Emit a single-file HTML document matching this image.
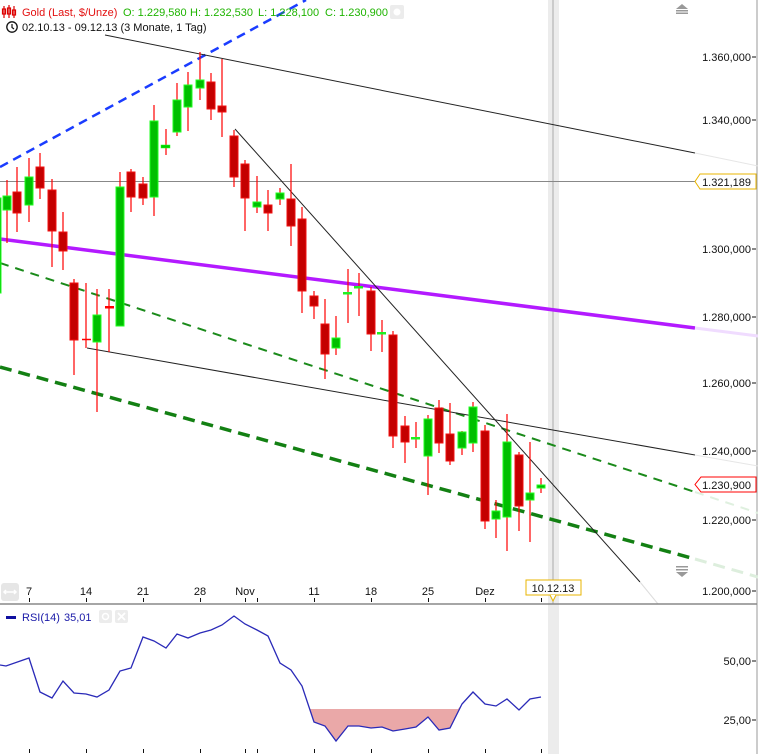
<!DOCTYPE html>
<html><head><meta charset="utf-8"><style>
html,body{margin:0;padding:0;background:#fff;width:758px;height:754px;overflow:hidden}
svg{display:block;font-family:"Liberation Sans",Arial,sans-serif}
.w{stroke:#f00;stroke-width:1.2}
.r{fill:#c40000;stroke:#f01010;stroke-width:1}
.g{fill:#00bf00;stroke:#20ff20;stroke-width:1}
.ax{font-size:11px;fill:#111;text-anchor:end}
.xl{font-size:11px;fill:#111;text-anchor:middle}
.hg{font-size:11px;fill:#1eb400}
</style></head><body>
<svg width="758" height="754" viewBox="0 0 758 754">
<rect x="548" y="0" width="11" height="754" fill="#ececec"/>
<line x1="553" y1="0" x2="553" y2="604" stroke="#aaa" stroke-width="1"/>
<line x1="757" y1="0" x2="757" y2="754" stroke="#999"/>
<line x1="0" y1="181.5" x2="695" y2="181.5" stroke="#888" stroke-width="1"/>

<line x1="0" y1="167" x2="306" y2="0" stroke="#1a3cff" stroke-width="2.5" stroke-dasharray="9,6"/>
<line x1="105" y1="35" x2="695" y2="153" stroke="#222" stroke-width="1"/>
<line x1="695" y1="153" x2="758" y2="166" stroke="#e6e6e6" stroke-width="1"/>
<line x1="0" y1="239" x2="695" y2="328" stroke="#b31aff" stroke-width="3.5"/>
<line x1="695" y1="328" x2="758" y2="336" stroke="#f0dcff" stroke-width="3"/>
<line x1="0" y1="263" x2="695" y2="492" stroke="#1a8a1a" stroke-width="2" stroke-dasharray="9,7"/>
<line x1="695" y1="492" x2="758" y2="513" stroke="#dff0df" stroke-width="2" stroke-dasharray="9,7"/>
<line x1="0" y1="367" x2="695" y2="559" stroke="#138013" stroke-width="3.5" stroke-dasharray="12,7"/>
<line x1="695" y1="559" x2="758" y2="577" stroke="#ddeedd" stroke-width="3" stroke-dasharray="12,7"/>
<line x1="87" y1="348" x2="695" y2="455" stroke="#222" stroke-width="1"/>
<line x1="695" y1="455" x2="758" y2="466" stroke="#e6e6e6"/>
<line x1="235" y1="129" x2="640" y2="582" stroke="#222" stroke-width="1"/>
<line x1="640" y1="582" x2="658" y2="604" stroke="#ddd"/>

<g>
<line class="w" x1="0" y1="198" x2="0" y2="293"/><rect class="g" x="-4" y="198" width="5" height="95"/>
<line class="w" x1="7" y1="180" x2="7" y2="243"/><rect class="g" x="3" y="196" width="8" height="14"/>
<line class="w" x1="17" y1="167" x2="17" y2="232"/><rect class="r" x="13" y="192" width="8" height="21"/>
<line class="w" x1="29" y1="158" x2="29" y2="222"/><rect class="g" x="25" y="177" width="8" height="28"/>
<line class="w" x1="40" y1="153" x2="40" y2="199"/><rect class="r" x="36" y="167" width="8" height="21"/>
<line class="w" x1="52" y1="179" x2="52" y2="267"/><rect class="r" x="48" y="190" width="8" height="41"/>
<line class="w" x1="63" y1="212" x2="63" y2="270"/><rect class="r" x="59" y="232" width="8" height="19"/>
<line class="w" x1="74" y1="279" x2="74" y2="375"/><rect class="r" x="70" y="283" width="8" height="57"/>
<line class="w" x1="86" y1="283" x2="86" y2="348"/><line x1="82" y1="339.5" x2="91" y2="339.5" stroke="#f00" stroke-width="1.5"/>
<line class="w" x1="97" y1="289" x2="97" y2="412"/><rect class="g" x="93" y="315" width="8" height="27"/>
<line class="w" x1="109" y1="289" x2="109" y2="352"/><rect x="105" y="306" width="9" height="2.5" fill="#f00"/>
<line class="w" x1="120" y1="172" x2="120" y2="326"/><rect class="g" x="116" y="187" width="8" height="139"/>
<line class="w" x1="131" y1="169" x2="131" y2="212"/><rect class="r" x="127" y="172" width="8" height="25"/>
<line class="w" x1="143" y1="177" x2="143" y2="205"/><rect class="r" x="139" y="184" width="8" height="14"/>
<line class="w" x1="154" y1="105" x2="154" y2="216"/><rect class="g" x="150" y="121" width="8" height="76"/>
<line class="w" x1="166" y1="129" x2="166" y2="155"/><rect x="161" y="145" width="9" height="3" fill="#00d000" stroke="#20ff20" stroke-width=".5"/>
<line class="w" x1="177" y1="83" x2="177" y2="136"/><rect class="g" x="173" y="100" width="8" height="32"/>
<line class="w" x1="188" y1="72" x2="188" y2="131"/><rect class="g" x="184" y="85" width="8" height="22"/>
<line class="w" x1="200" y1="52" x2="200" y2="100"/><rect class="g" x="196" y="80" width="8" height="8"/>
<line class="w" x1="211" y1="73" x2="211" y2="120"/><rect class="r" x="207" y="82" width="8" height="27"/>
<line class="w" x1="222" y1="59" x2="222" y2="137"/><rect class="r" x="218" y="106" width="8" height="6"/>
<line class="w" x1="234" y1="130" x2="234" y2="187"/><rect class="r" x="230" y="136" width="8" height="41"/>
<line class="w" x1="245" y1="160" x2="245" y2="231"/><rect class="r" x="241" y="164" width="8" height="34"/>
<line class="w" x1="257" y1="176" x2="257" y2="213"/><rect class="g" x="253" y="202" width="8" height="5"/>
<line class="w" x1="268" y1="190" x2="268" y2="231"/><rect class="r" x="264" y="205" width="8" height="8"/>
<line class="w" x1="280" y1="188" x2="280" y2="205"/><rect class="g" x="276" y="193" width="8" height="6"/>
<line class="w" x1="291" y1="164" x2="291" y2="246"/><rect class="r" x="287" y="199" width="8" height="27"/>
<line class="w" x1="302" y1="207" x2="302" y2="313"/><rect class="r" x="298" y="219" width="8" height="72"/>
<line class="w" x1="314" y1="291" x2="314" y2="319"/><rect class="r" x="310" y="296" width="8" height="10"/>
<line class="w" x1="325" y1="299" x2="325" y2="379"/><rect class="r" x="321" y="324" width="8" height="30"/>
<line class="w" x1="336" y1="316" x2="336" y2="355"/><rect class="g" x="332" y="338" width="8" height="10"/>
<line class="w" x1="348" y1="269" x2="348" y2="323"/><rect x="343" y="292" width="9" height="2.5" fill="#20f020"/>
<line class="w" x1="359" y1="273" x2="359" y2="316"/><rect x="354" y="286" width="9" height="2.5" fill="#20f020"/>
<line class="w" x1="371" y1="287" x2="371" y2="351"/><rect class="r" x="367" y="291" width="8" height="43"/>
<line class="w" x1="382" y1="320" x2="382" y2="352"/><rect x="377" y="332" width="9" height="2.5" fill="#20f020"/>
<line class="w" x1="393" y1="331" x2="393" y2="448"/><rect class="r" x="389" y="335" width="8" height="101"/>
<line class="w" x1="405" y1="416" x2="405" y2="463"/><rect class="r" x="401" y="426" width="8" height="16"/>
<line class="w" x1="416" y1="422" x2="416" y2="448"/><rect x="411" y="437" width="9" height="2.5" fill="#20f020"/>
<line class="w" x1="428" y1="415" x2="428" y2="495"/><rect class="g" x="424" y="419" width="8" height="37"/>
<line class="w" x1="439" y1="400" x2="439" y2="453"/><rect class="r" x="435" y="408" width="8" height="35"/>
<line class="w" x1="450" y1="403" x2="450" y2="465"/><rect class="r" x="446" y="434" width="8" height="27"/>
<line class="w" x1="462" y1="431" x2="462" y2="455"/><rect class="g" x="458" y="432" width="8" height="16"/>
<line class="w" x1="473" y1="402" x2="473" y2="452"/><rect class="g" x="469" y="407" width="8" height="36"/>
<line class="w" x1="485" y1="425" x2="485" y2="529"/><rect class="r" x="481" y="431" width="8" height="90"/>
<line class="w" x1="496" y1="500" x2="496" y2="538"/><rect class="g" x="492" y="511" width="8" height="8"/>
<line class="w" x1="507" y1="414" x2="507" y2="551"/><rect class="g" x="503" y="442" width="8" height="75"/>
<line class="w" x1="519" y1="452" x2="519" y2="531"/><rect class="r" x="515" y="455" width="8" height="51"/>
<line class="w" x1="530" y1="442" x2="530" y2="542"/><rect class="g" x="526" y="493" width="8" height="7"/>
<line class="w" x1="541" y1="478" x2="541" y2="493"/><rect class="g" x="537" y="485" width="8" height="3"/>
</g>

<g stroke="#d00" stroke-width="1.2" fill="none">
<line x1="4" y1="6" x2="4" y2="18"/><rect x="2.5" y="9" width="3" height="5"/>
<line x1="9" y1="5" x2="9" y2="18"/><rect x="7.5" y="8" width="3" height="6"/>
<line x1="14" y1="6" x2="14" y2="18"/><rect x="12.5" y="10" width="3" height="5"/>
</g>
<text x="22" y="16" font-size="11" fill="#e31010">Gold (Last, $/Unze)</text>
<text x="123" y="16" class="hg">O: 1.229,580</text>
<text x="190" y="16" class="hg">H: 1.232,530</text>
<text x="258" y="16" class="hg">L: 1.228,100</text>
<text x="325" y="16" class="hg">C: 1.230,900</text>
<rect x="390" y="5" width="14" height="14" rx="2" fill="#ececec"/>
<circle cx="397" cy="12" r="3.5" fill="#fff"/>
<circle cx="12" cy="27" r="5.2" fill="none" stroke="#111" stroke-width="1.3"/>
<path d="M12 24 V27.5 L14 29" stroke="#111" stroke-width="1.2" fill="none"/>
<text x="22" y="31" font-size="11" fill="#111">02.10.13 - 09.12.13 (3 Monate, 1 Tag)</text>

<path d="M676 9 L682 4 L688 9 Z" fill="#999"/><rect x="676" y="10" width="12" height="1.5" fill="#999"/><rect x="676" y="12.5" width="12" height="1.5" fill="#999"/>
<rect x="676" y="566" width="12" height="1.5" fill="#999"/><rect x="676" y="569" width="12" height="1.5" fill="#999"/><path d="M676 572 L688 572 L682 577 Z" fill="#999"/>

<g class="ax">
<text x="751" y="61">1.360,000</text>
<text x="751" y="124">1.340,000</text>
<text x="751" y="253">1.300,000</text>
<text x="751" y="321">1.280,000</text>
<text x="751" y="387">1.260,000</text>
<text x="751" y="455">1.240,000</text>
<text x="751" y="524">1.220,000</text>
<text x="751" y="595">1.200,000</text>
<text x="751" y="665">50,00</text>
<text x="751" y="724">25,00</text>
</g>
<g stroke="#111" stroke-width="1">
<line x1="752" y1="57" x2="756" y2="57"/><line x1="752" y1="120" x2="756" y2="120"/>
<line x1="752" y1="249" x2="756" y2="249"/><line x1="752" y1="317" x2="756" y2="317"/>
<line x1="752" y1="383" x2="756" y2="383"/><line x1="752" y1="451" x2="756" y2="451"/>
<line x1="752" y1="520" x2="756" y2="520"/><line x1="752" y1="591" x2="756" y2="591"/>
<line x1="752" y1="661" x2="756" y2="661"/><line x1="752" y1="720" x2="756" y2="720"/>
</g>
<path d="M700 174 H756 V189 H700 L695 181.5 Z" fill="#fff" stroke="#e8b400" stroke-width="1"/>
<text x="751" y="186" class="ax">1.321,189</text>
<path d="M701 477 H756 V492 H701 L695 484.5 Z" fill="#fff" stroke="#f00" stroke-width="1"/>
<text x="751" y="489" class="ax">1.230,900</text>

<g class="xl">
<text x="29" y="595">7</text><text x="86" y="595">14</text><text x="143" y="595">21</text>
<text x="200" y="595">28</text><text x="245" y="595">Nov</text><text x="314" y="595">11</text>
<text x="371" y="595">18</text><text x="428" y="595">25</text><text x="485" y="595">Dez</text>
</g>
<g stroke="#111" stroke-width="1">
<line x1="29.5" y1="598" x2="29.5" y2="602"/><line x1="86.5" y1="598" x2="86.5" y2="602"/>
<line x1="143.5" y1="598" x2="143.5" y2="602"/><line x1="200.5" y1="598" x2="200.5" y2="602"/>
<line x1="245.5" y1="598" x2="245.5" y2="602"/><line x1="257.5" y1="598" x2="257.5" y2="602"/>
<line x1="314.5" y1="598" x2="314.5" y2="602"/><line x1="371.5" y1="598" x2="371.5" y2="602"/>
<line x1="428.5" y1="598" x2="428.5" y2="602"/><line x1="485.5" y1="598" x2="485.5" y2="602"/>
<line x1="541.5" y1="598" x2="541.5" y2="602"/>
<line x1="29.5" y1="749" x2="29.5" y2="753"/><line x1="86.5" y1="749" x2="86.5" y2="753"/>
<line x1="143.5" y1="749" x2="143.5" y2="753"/><line x1="200.5" y1="749" x2="200.5" y2="753"/>
<line x1="245.5" y1="749" x2="245.5" y2="753"/><line x1="257.5" y1="749" x2="257.5" y2="753"/>
<line x1="314.5" y1="749" x2="314.5" y2="753"/><line x1="371.5" y1="749" x2="371.5" y2="753"/>
<line x1="428.5" y1="749" x2="428.5" y2="753"/><line x1="485.5" y1="749" x2="485.5" y2="753"/>
<line x1="541.5" y1="749" x2="541.5" y2="753"/>
</g>
<rect x="526" y="580" width="55" height="15" fill="#fff" stroke="#e8b400"/>
<path d="M550 595 L553 601 L556 595" fill="#fff" stroke="#e8b400"/>
<text x="553" y="592" class="xl">10.12.13</text>
<rect x="1" y="583" width="18" height="18" rx="3" fill="#e6e6e6"/>
<path d="M4 592 H16 M6 590 L4 592 L6 594 M14 590 L16 592 L14 594" stroke="#fff" stroke-width="1.5" fill="none"/>

<line x1="0" y1="604" x2="757" y2="604" stroke="#888" stroke-width="1.5"/>

<rect x="6" y="616" width="10" height="3" fill="#1010a0"/>
<text x="22" y="621" font-size="11" fill="#1a1aa8">RSI(14)</text>
<text x="64" y="621" font-size="11" fill="#1a1aa8">35,01</text>
<rect x="99" y="610" width="13" height="13" rx="2" fill="#ececec"/><circle cx="105.5" cy="616.5" r="3" fill="none" stroke="#fff" stroke-width="1.5"/>
<rect x="115" y="610" width="13" height="13" rx="2" fill="#ececec"/><path d="M118 613 L125 620 M125 613 L118 620" stroke="#fff" stroke-width="1.8"/>

<polygon points="310,709 458,709 462,704 450,728 439,730 428,717 416,727 405,729 393,731 382,727 371,728 359,726 348,726 336,741 325,726 314,722" fill="#eaa8a8"/>
<polyline fill="none" stroke="#2a2ab8" stroke-width="1.3" points="0,665 6,666 29,658 40,692 52,698 63,681 74,693 86,694 97,697 109,690 120,671 131,668 143,637 154,641 166,648 177,634 188,638 200,633 211,630 222,625 234,616 245,624 257,630 268,636 280,663 291,670 302,686 314,722 325,726 336,741 348,726 359,726 371,728 382,727 393,731 405,729 416,727 428,717 439,730 450,728 462,704 473,692 485,704 496,706 507,699 519,710 530,699 541,697"/>
</svg>
</body></html>
